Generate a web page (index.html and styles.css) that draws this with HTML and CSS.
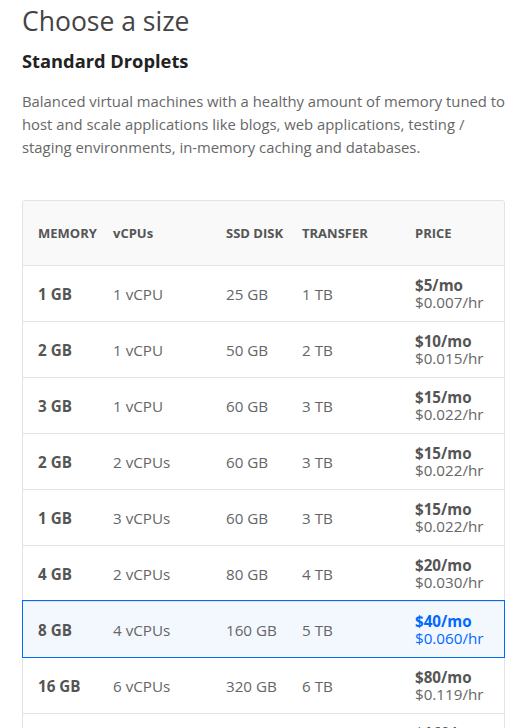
FILE: index.html
```html
<!DOCTYPE html>
<html>
<head>
<meta charset="utf-8">
<link rel="stylesheet" href="styles.css">
</head>
<body>
<div class="page">
  <h1 class="title">Choose a size</h1>
  <h3 class="subtitle">Standard Droplets</h3>
  <p class="desc">Balanced virtual machines with a healthy amount of memory tuned to host and scale applications like blogs, web applications, testing / staging environments, in-memory caching and databases.</p>
  <div class="table">
    <div class="row head">
      <div>MEMORY</div><div>vCPUs</div><div>SSD DISK</div><div>TRANSFER</div><div>PRICE</div>
    </div>
    <div class="row"><div class="mem">1 GB</div><div>1 vCPU</div><div>25 GB</div><div>1 TB</div><div class="price"><b>$5/mo</b><span>$0.007/hr</span></div></div>
    <div class="row"><div class="mem">2 GB</div><div>1 vCPU</div><div>50 GB</div><div>2 TB</div><div class="price"><b>$10/mo</b><span>$0.015/hr</span></div></div>
    <div class="row"><div class="mem">3 GB</div><div>1 vCPU</div><div>60 GB</div><div>3 TB</div><div class="price"><b>$15/mo</b><span>$0.022/hr</span></div></div>
    <div class="row"><div class="mem">2 GB</div><div>2 vCPUs</div><div>60 GB</div><div>3 TB</div><div class="price"><b>$15/mo</b><span>$0.022/hr</span></div></div>
    <div class="row"><div class="mem">1 GB</div><div>3 vCPUs</div><div>60 GB</div><div>3 TB</div><div class="price"><b>$15/mo</b><span>$0.022/hr</span></div></div>
    <div class="row"><div class="mem">4 GB</div><div>2 vCPUs</div><div>80 GB</div><div>4 TB</div><div class="price"><b>$20/mo</b><span>$0.030/hr</span></div></div>
    <div class="row selected"><div class="mem">8 GB</div><div>4 vCPUs</div><div>160 GB</div><div>5 TB</div><div class="price"><b>$40/mo</b><span>$0.060/hr</span></div></div>
    <div class="row"><div class="mem">16 GB</div><div>6 vCPUs</div><div>320 GB</div><div>6 TB</div><div class="price"><b>$80/mo</b><span>$0.119/hr</span></div></div>
    <div class="row"><div class="mem">32 GB</div><div>8 vCPUs</div><div>640 GB</div><div>7 TB</div><div class="price"><b>$160/mo</b><span>$0.238/hr</span></div></div>
  </div>
</div>
</body>
</html>
```
FILE: styles.css
```css
html, body {
  margin: 0;
  padding: 0;
  background: #fff;
}
body {
  font-family: "Open Sans", "Liberation Sans", sans-serif;
  color: #676767;
}
.page {
  padding: 3px 12px 0 22px;
}
.title {
  margin: 0;
  font-size: 26.5px;
  font-weight: 400;
  color: #444;
  line-height: 36px;
}
.subtitle {
  margin: 10px 0 0;
  font-size: 18.3px;
  font-weight: 700;
  color: #222;
  line-height: 24px;
}
.desc {
  margin: 17px 0 0;
  font-size: 14.85px;
  line-height: 23px;
  color: #676767;
}
.table {
  margin-top: 41px;
  border: 1px solid #e3e3e3;
  border-radius: 3px;
}
.row {
  display: grid;
  grid-template-columns: 75px 113px 76px 113px 1fr;
  align-items: center;
  height: 55px;
  padding-left: 15px;
  border-top: 1px solid #e3e3e3;
  font-size: 15.2px;
  color: #666;
}
.row.head {
  height: 64px;
  border-top: none;
  background: #f9f9f9;
  font-size: 13px;
  font-weight: 700;
  color: #555;
  border-radius: 3px 3px 0 0;
}
.mem {
  font-weight: 700;
  color: #555;
}
.price {
  display: flex;
  flex-direction: column;
  line-height: 17px;
}
.price b {
  color: #555;
}
.row.selected {
  background: #f3f8ff;
  outline: 1px solid #0069ff;
  position: relative;
}
.row.selected .price b,
.row.selected .price span {
  color: #0069ff;
}
```
